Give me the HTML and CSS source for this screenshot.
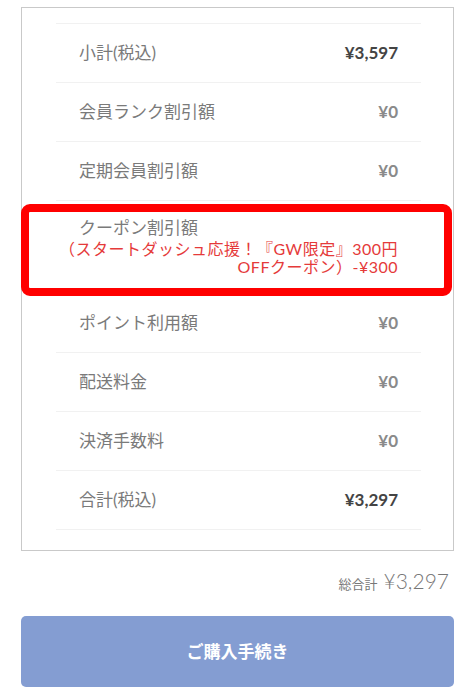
FILE: index.html
```html
<!DOCTYPE html>
<html lang="ja">
<head>
    <meta charset="UTF-8">
    <title>注文内容の確認</title>
    <link rel="stylesheet" href="styles.css">
</head>
<body>
<div class="orderWrap">
    <div class="summary">
        <ul class="priceList">
            <li class="priceRow">
                <span class="label">小計(税込)</span>
                <span class="value strong">¥3,597</span>
            </li>
            <li class="priceRow">
                <span class="label">会員ランク割引額</span>
                <span class="value">¥0</span>
            </li>
            <li class="priceRow">
                <span class="label">定期会員割引額</span>
                <span class="value">¥0</span>
            </li>
            <li class="priceRow couponRow">
                <div class="label">クーポン割引額</div>
                <div class="couponText">（スタートダッシュ応援！『GW限定』300円<br>OFFクーポン）-¥300</div>
                <span class="markBox"></span>
            </li>
            <li class="priceRow">
                <span class="label">ポイント利用額</span>
                <span class="value">¥0</span>
            </li>
            <li class="priceRow">
                <span class="label">配送料金</span>
                <span class="value">¥0</span>
            </li>
            <li class="priceRow">
                <span class="label">決済手数料</span>
                <span class="value">¥0</span>
            </li>
            <li class="priceRow">
                <span class="label">合計(税込)</span>
                <span class="value strong">¥3,297</span>
            </li>
        </ul>
    </div>

    <div class="grandTotal">
        <span class="grandLabel">総合計</span>
        <span class="grandPrice">¥3,297</span>
    </div>

    <a href="#" class="buyBtn">ご購入手続き</a>
</div>
</body>
</html>
```

FILE: styles.css
```css
* {
    margin: 0;
    padding: 0;
    box-sizing: border-box;
}

ul {
    list-style: none;
}

body {
    background-color: #fff;
    font-family: Lato, "Noto Sans", "Noto Sans CJK JP", sans-serif;
    color: #777;
}

.orderWrap {
    width: 433px;
    margin: 7px 0 0 21px;
}

.summary {
    border: 1px solid #c9c9c9;
    padding: 15px 32px 20px 34px;
}

.priceList {
    border-bottom: 1px solid #f1f1f1;
}

.priceRow {
    display: flex;
    justify-content: space-between;
    align-items: center;
    padding: 17px 23px;
    border-top: 1px solid #f1f1f1;
    line-height: 24px;
}

.label {
    font-size: 17px;
    color: #7a7a7a;
}

.value {
    font-size: 17px;
    font-weight: 700;
    color: #8a8a8a;
}

.value.strong {
    color: #444;
}

.couponRow {
    display: block;
    position: relative;
    padding-top: 15px;
    padding-bottom: 17px;
}

.couponText {
    margin-left: -24px;
    font-size: 16px;
    line-height: 18px;
    letter-spacing: 0.5px;
    color: #e53a3a;
    text-align: right;
}

/* 注目用の赤枠 */
.markBox {
    position: absolute;
    top: 3px;
    left: -35px;
    right: -31px;
    bottom: -3px;
    border: 8px solid #ff0000;
    border-radius: 9px;
}

.grandTotal {
    margin-top: 16px;
    padding-right: 5px;
    text-align: right;
    line-height: 28px;
    color: #777;
}

.grandLabel {
    font-size: 13px;
}

.grandPrice {
    font-size: 21px;
    font-weight: 300;
    margin-left: 2px;
}

.buyBtn {
    display: block;
    height: 71px;
    margin-top: 18px;
    background-color: #849dd2;
    border-radius: 5px;
    color: #fff;
    font-size: 17px;
    font-weight: 700;
    line-height: 71px;
    text-align: center;
    text-decoration: none;
}
```
